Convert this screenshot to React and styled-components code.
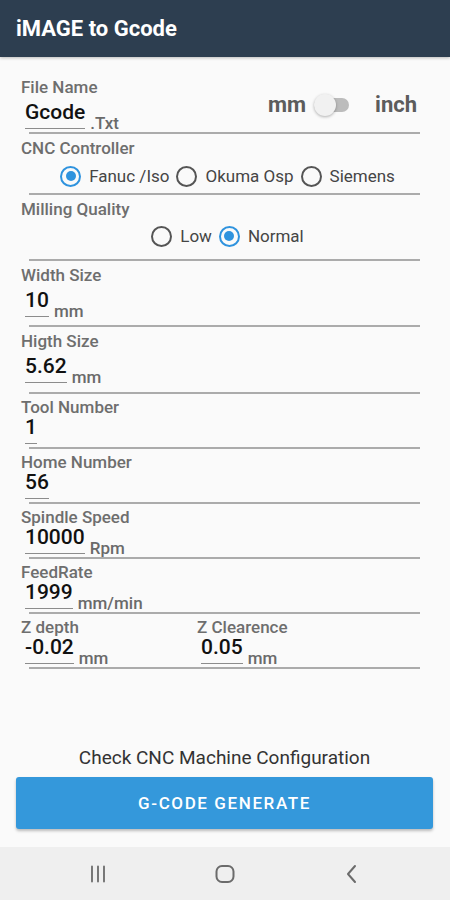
import styled, { createGlobalStyle } from "styled-components";

const GlobalStyle = createGlobalStyle`
  html, body {
    margin: 0;
    padding: 0;
    background: #fafafa;
    font-family: Roboto, "Liberation Sans", sans-serif;
  }
  #root {
    height: 900px;
  }
`;

// 화면 전체
const Screen = styled.div`
  width: 450px;
  height: 900px;
  display: flex;
  flex-direction: column;
  background: #fafafa;
  overflow: hidden;
`;

const AppBar = styled.header`
  height: 57px;
  flex-shrink: 0;
  background: #2d3e50;
  display: flex;
  align-items: center;
  padding-left: 16px;
  box-shadow: 0 1px 3px rgba(0, 0, 0, 0.25);
  position: relative;
  z-index: 1;
`;

const Title = styled.h1`
  margin: 0;
  color: #ffffff;
  font-size: 22px;
  font-weight: 700;
`;

const Form = styled.main`
  flex: 1;
  padding: 0 30px 0 21px;
`;

const Field = styled.div`
  padding-top: ${({ $top }) => $top}px;
  display: flex;
  flex-direction: column;
  gap: ${({ $gap }) => $gap || 0}px;
`;

const Label = styled.div`
  font-size: 17px;
  line-height: 18px;
  font-weight: 500;
  color: #6e6e6e;
`;

const ValueRow = styled.div`
  display: flex;
  align-items: flex-end;
  padding-left: 4px;
`;

const Value = styled.span`
  font-size: 21px;
  line-height: 22px;
  font-weight: 500;
  color: #111111;
  padding-bottom: 5px;
  border-bottom: 1px solid #8c8c8c;
`;

const Unit = styled.span`
  font-size: 17px;
  line-height: 16px;
  font-weight: 500;
  color: #6a6a6a;
  margin-left: 5px;
  margin-bottom: -2px;
`;

const Divider = styled.div`
  height: 2px;
  margin-left: 8px;
  margin-top: ${({ $top }) => $top}px;
  background: #ababab;
`;

const FileRow = styled.div`
  padding-top: 21px;
  display: flex;
  align-items: center;
  justify-content: space-between;
`;

const FileColumn = styled.div`
  display: flex;
  flex-direction: column;
  gap: 5px;
`;

const UnitToggle = styled.div`
  display: flex;
  align-items: center;
  margin-right: 3px;
  margin-top: 2px;
`;

const ToggleText = styled.span`
  font-size: 22px;
  line-height: 24px;
  font-weight: 700;
  color: #5c5c5c;
`;

const Switch = styled.div`
  position: relative;
  width: 35px;
  height: 22px;
  margin: 0 26px 0 8px;
  display: flex;
  align-items: center;
`;

const Track = styled.div`
  width: 35px;
  height: 14px;
  border-radius: 7px;
  background: #bcbcbc;
`;

const Thumb = styled.div`
  position: absolute;
  left: 0;
  top: 0;
  width: 22px;
  height: 22px;
  border-radius: 50%;
  background: #f1f1f1;
  box-shadow: 0 1px 3px rgba(0, 0, 0, 0.3);
`;

const RadioGroup = styled.div`
  display: flex;
  justify-content: center;
  align-items: center;
  gap: 7px;
  height: 24px;
  margin-top: ${({ $top }) => $top}px;
  padding-left: 14px;
`;

const RadioOption = styled.label`
  display: flex;
  align-items: center;
  gap: 8px;
  font-size: 17px;
  color: #454545;
`;

const RadioCircle = styled.span`
  width: 21px;
  height: 21px;
  box-sizing: border-box;
  border-radius: 50%;
  border: 2px solid ${({ $checked }) => ($checked ? "#2f93de" : "#555555")};
  display: flex;
  align-items: center;
  justify-content: center;

  &::after {
    content: "";
    width: 10px;
    height: 10px;
    border-radius: 50%;
    background: #2f93de;
    display: ${({ $checked }) => ($checked ? "block" : "none")};
  }
`;

const TwoColumns = styled.div`
  display: grid;
  grid-template-columns: 176px 1fr;
`;

const Footer = styled.footer`
  flex-shrink: 0;
  padding: 0 17px 18px 16px;
  display: flex;
  flex-direction: column;
  align-items: stretch;
  gap: 9px;
`;

const Notice = styled.div`
  text-align: center;
  font-size: 19px;
  line-height: 21px;
  color: #333333;
`;

const GenerateButton = styled.button`
  height: 52px;
  border: none;
  border-radius: 3px;
  background: #3498db;
  color: #ffffff;
  font-family: Roboto, "Liberation Sans", sans-serif;
  font-size: 17px;
  font-weight: 500;
  letter-spacing: 1.6px;
  box-shadow: 0 2px 3px rgba(0, 0, 0, 0.25);
`;

const NavBar = styled.nav`
  height: 53px;
  flex-shrink: 0;
  background: #efefef;
  display: flex;
  align-items: center;
  justify-content: space-around;
  padding: 0 35px;
`;

const NavIcon = styled.svg`
  width: 24px;
  height: 24px;
  color: #6b6b6b;
`;

const controllers = [
  { name: "Fanuc /Iso", checked: true },
  { name: "Okuma Osp", checked: false },
  { name: "Siemens", checked: false },
];

const qualities = [
  { name: "Low", checked: false },
  { name: "Normal", checked: true },
];

const fields = [
  { label: "Tool Number", value: "1" },
  { label: "Home Number", value: "56" },
  { label: "Spindle Speed", value: "10000", unit: "Rpm" },
  { label: "FeedRate", value: "1999", unit: "mm/min" },
];

function Radios({ options, top }) {
  return (
    <RadioGroup $top={top}>
      {options.map((o) => (
        <RadioOption key={o.name}>
          <RadioCircle $checked={o.checked} />
          {o.name}
        </RadioOption>
      ))}
    </RadioGroup>
  );
}

function ValueField({ value, unit }) {
  return (
    <ValueRow>
      <Value>{value}</Value>
      {unit && <Unit>{unit}</Unit>}
    </ValueRow>
  );
}

export default function App() {
  return (
    <>
      <GlobalStyle />
      <Screen>
        <AppBar>
          <Title>iMAGE to Gcode</Title>
        </AppBar>

        <Form>
          <FileRow>
            <FileColumn>
              <Label>File Name</Label>
              <ValueField value="Gcode" unit=".Txt" />
            </FileColumn>
            <UnitToggle>
              <ToggleText>mm</ToggleText>
              <Switch>
                <Track />
                <Thumb />
              </Switch>
              <ToggleText>inch</ToggleText>
            </UnitToggle>
          </FileRow>
          <Divider $top={3} />

          <Field $top={5}>
            <Label>CNC Controller</Label>
            <Radios options={controllers} top={7} />
          </Field>
          <Divider $top={5} />

          <Field $top={5}>
            <Label>Milling Quality</Label>
            <Radios options={qualities} top={6} />
          </Field>
          <Divider $top={11} />

          <Field $top={5} $gap={5}>
            <Label>Width Size</Label>
            <ValueField value="10" unit="mm" />
          </Field>
          <Divider $top={8} />

          <Field $top={5} $gap={5}>
            <Label>Higth Size</Label>
            <ValueField value="5.62" unit="mm" />
          </Field>
          <Divider $top={9} />

          {fields.map((f) => (
            <div key={f.label}>
              <Field $top={4}>
                <Label>{f.label}</Label>
                <ValueField value={f.value} unit={f.unit} />
              </Field>
              <Divider $top={3} />
            </div>
          ))}

          <TwoColumns>
            <Field $top={4}>
              <Label>Z depth</Label>
              <ValueField value="-0.02" unit="mm" />
            </Field>
            <Field $top={4}>
              <Label>Z Clearence</Label>
              <ValueField value="0.05" unit="mm" />
            </Field>
          </TwoColumns>
          <Divider $top={3} />
        </Form>

        <Footer>
          <Notice>Check CNC Machine Configuration</Notice>
          <GenerateButton>G-CODE GENERATE</GenerateButton>
        </Footer>

        <NavBar>
          <NavIcon viewBox="0 0 24 24" fill="none" stroke="currentColor" strokeWidth="1.8" strokeLinecap="round">
            <path d="M6 4.5v15M12 4.5v15M18 4.5v15" />
          </NavIcon>
          <NavIcon viewBox="0 0 24 24" fill="none" stroke="currentColor" strokeWidth="2">
            <rect x="3.5" y="4" width="17" height="16" rx="5.5" />
          </NavIcon>
          <NavIcon viewBox="0 0 24 24" fill="none" stroke="currentColor" strokeWidth="2" strokeLinecap="round" strokeLinejoin="round">
            <path d="M15 4l-7 8 7 8" />
          </NavIcon>
        </NavBar>
      </Screen>
    </>
  );
}
